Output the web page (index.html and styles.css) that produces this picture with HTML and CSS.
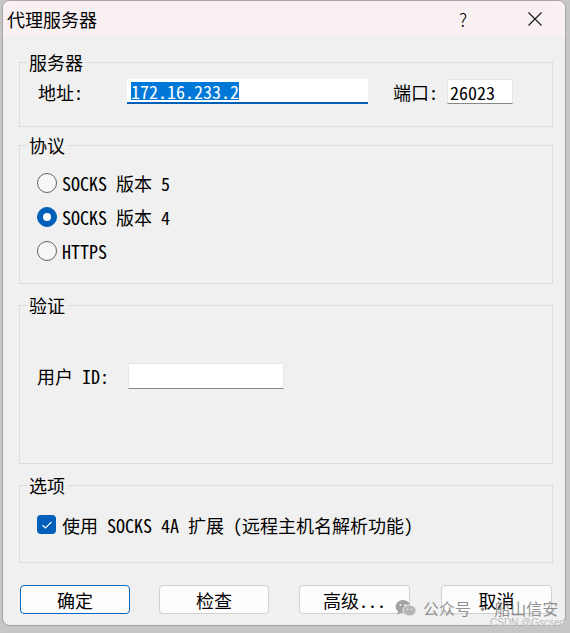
FILE: index.html
```html
<!DOCTYPE html>
<html lang="zh-CN">
  <head>
    <meta charset="UTF-8" />
    <meta name="viewport" content="width=device-width, initial-scale=1.0" />
    <title>代理服务器</title>
    <link rel="stylesheet" href="styles.css">
  </head>
  <body>
    <div class="window">
      <div class="titlebar">
        <span class="title">代理服务器</span>
        <span class="help">?</span>
        <svg class="close" width="16" height="16" viewBox="0 0 16 16">
          <path d="M1.5 1.5 L14.5 14.5 M14.5 1.5 L1.5 14.5" stroke="#1a1a1a" stroke-width="1.2" fill="none" />
        </svg>
      </div>

      <div class="content">
        <fieldset class="group g-server">
          <legend>服务器</legend>
          <div class="row">
            <span class="lbl lbl-addr">地址:</span>
            <span class="field field-addr"><span class="sel">172.16.233.2</span></span>
            <span class="lbl lbl-port">端口:</span>
            <span class="field field-port">26023</span>
          </div>
        </fieldset>

        <fieldset class="group g-proto">
          <legend>协议</legend>
          <div class="radio"><span class="dot"></span>SOCKS 版本 5</div>
          <div class="radio"><span class="dot on"></span>SOCKS 版本 4</div>
          <div class="radio"><span class="dot"></span>HTTPS</div>
        </fieldset>

        <fieldset class="group g-auth">
          <legend>验证</legend>
          <div class="row">
            <span class="lbl lbl-user">用户 ID:</span>
            <span class="field field-user"></span>
          </div>
        </fieldset>

        <fieldset class="group g-opts">
          <legend>选项</legend>
          <div class="check">
            <span class="box">
              <svg width="12" height="10" viewBox="0 0 12 10">
                <path d="M1.5 5.2 L4.5 8 L10.5 1.8" stroke="#fff" stroke-width="1.2" fill="none" />
              </svg>
            </span>使用 SOCKS 4A 扩展 (远程主机名解析功能)
          </div>
        </fieldset>

        <div class="buttons">
          <button class="btn focus">确定</button>
          <button class="btn b2">检查</button>
          <button class="btn b3">高级...</button>
          <button class="btn b4">取消</button>
        </div>
      </div>

      <div class="mark">
        <svg width="22" height="18" viewBox="0 0 22 18">
          <ellipse cx="8" cy="7.5" rx="7.5" ry="6.5" fill="#a3a3a3" />
          <path d="M3 12 L2.5 15.5 L6.5 13.5 Z" fill="#a3a3a3" />
          <ellipse cx="14.5" cy="11.5" rx="6.5" ry="5.5" fill="#b5b5b5" stroke="#f0f0f0" stroke-width="1" />
          <circle cx="5.5" cy="6" r="1" fill="#f0f0f0" />
          <circle cx="10" cy="6" r="1" fill="#f0f0f0" />
          <circle cx="12.5" cy="10.5" r="0.8" fill="#f0f0f0" />
          <circle cx="16.5" cy="10.5" r="0.8" fill="#f0f0f0" />
        </svg>
        <span>公众号 · 船山信安</span>
      </div>
    </div>
    <div class="csdn">CSDN @Gscsed</div>
  </body>
</html>
```

FILE: styles.css
```css
body {
  margin: 0;
  position: relative;
  background: #c6c6c6;
  font-family: "Noto Sans Mono CJK SC", "Liberation Mono", "Noto Sans CJK SC", monospace;
  font-size: 18px;
  color: #000;
}
.window {
  position: relative;
  margin-left: 2px;
  width: 564px;
  height: 626px;
  box-sizing: border-box;
  background: #f0f0f0;
  border: 1px solid #a4a4a4;
  border-radius: 8px;
  overflow: hidden;
}
.titlebar {
  height: 35px;
  background: #f9f0f2;
  display: flex;
  align-items: center;
  padding-left: 4px;
}
.title {
  font-family: "Noto Sans CJK SC", sans-serif;
  font-size: 18px;
  line-height: 20px;
  flex: 1;
}
.help {
  font-family: "Noto Sans CJK SC", sans-serif;
  font-size: 18px;
  font-weight: 300;
  margin-right: 60px;
}
.close {
  margin-right: 22px;
}

.content {
  padding: 0 12px 0 16px;
}
.group {
  margin: 0;
  padding: 0 0 0 17px;
  border: 1px solid #dcdcdc;
  min-inline-size: 0;
}
.group legend {
  margin-left: -10px;
  padding: 0 2px;
  line-height: 21px;
}
.g-server {
  margin-top: 16px;
  padding-top: 6px;
  padding-bottom: 22px;
}
.g-proto {
  margin-top: 8px;
  padding-top: 10px;
  padding-bottom: 15px;
}
.g-auth {
  margin-top: 11px;
  padding-top: 47px;
  padding-bottom: 74px;
}
.g-opts {
  margin-top: 11px;
  padding-top: 12px;
  padding-bottom: 21px;
}

.row {
  display: flex;
  align-items: center;
  line-height: 20px;
}
.lbl-addr {
  margin-left: 1px;
  width: 89px;
}
.lbl-port {
  margin-left: 25px;
  width: 54px;
}
.lbl-user {
  width: 91px;
}
.field {
  background: #fff;
  box-sizing: border-box;
  display: flex;
  align-items: center;
}
.field-addr {
  width: 241px;
  height: 25px;
  border-bottom: 2px solid #005fb8;
  padding-left: 4px;
}
.sel {
  background: #0078d7;
  color: #fff;
  line-height: 18px;
}
.field-port {
  width: 66px;
  height: 25px;
  border: 1px solid #e6e6e6;
  border-bottom-color: #868686;
  padding-left: 2px;
}
.field-user {
  width: 156px;
  height: 26px;
  border: 1px solid #e6e6e6;
  border-bottom-color: #868686;
}

.radio {
  height: 34px;
  display: flex;
  align-items: center;
  line-height: 20px;
}
.dot {
  width: 20px;
  height: 20px;
  box-sizing: border-box;
  border: 1px solid #626262;
  border-radius: 50%;
  background: #f6f6f6;
  margin-right: 5px;
  display: flex;
  align-items: center;
  justify-content: center;
}
.dot.on {
  background: #005fb8;
  border-color: #005fb8;
}
.dot.on::after {
  content: "";
  width: 8px;
  height: 8px;
  border-radius: 50%;
  background: #fff;
}

.check {
  height: 33px;
  display: flex;
  align-items: center;
  line-height: 20px;
}
.box {
  width: 19px;
  height: 19px;
  border-radius: 4px;
  background: #005fb8;
  margin-right: 6px;
  display: flex;
  align-items: center;
  justify-content: center;
}

.buttons {
  margin-top: 22px;
  padding-left: 1px;
  display: flex;
}
.btn {
  width: 110px;
  height: 29px;
  font: inherit;
  line-height: 20px;
  color: #000;
  background: #fdfdfd;
  border: 1px solid #d0d0d0;
  border-radius: 4px;
  padding: 0;
}
.btn.focus {
  border-color: #0067c0;
}
.b2 {
  margin-left: 29px;
}
.b3 {
  margin-left: 30px;
  width: 111px;
}
.b4 {
  margin-left: 31px;
  width: 111px;
}

/* watermark over the bottom-right corner */
.mark {
  position: absolute;
  left: 392px;
  top: 597px;
  display: flex;
  align-items: center;
  gap: 6px;
  line-height: 20px;
  font-family: "Noto Sans CJK SC", sans-serif;
  font-size: 16px;
  color: rgba(110, 110, 110, 0.75);
}
.csdn {
  position: absolute;
  left: 490px;
  top: 617px;
  white-space: nowrap;
  line-height: 12px;
  font-family: "Liberation Sans", sans-serif;
  font-size: 10px;
  color: #b4b4b4;
  text-shadow: 0 0 1px #fff;
}
```
